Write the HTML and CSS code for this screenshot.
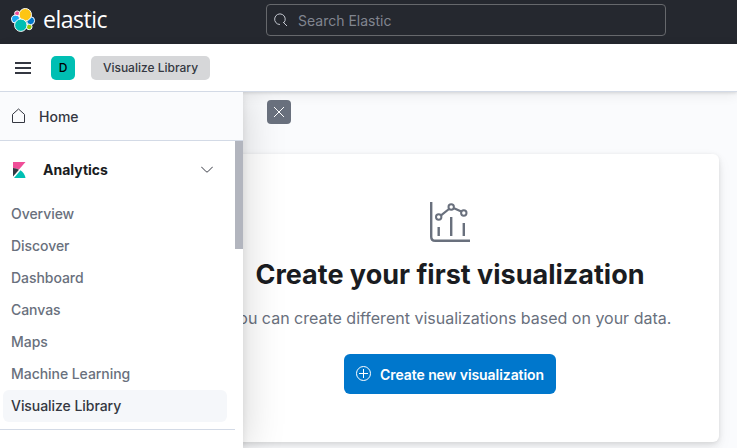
FILE: index.html
```html
<!DOCTYPE html>
<html lang="en">
<head>
<meta charset="utf-8">
<title>Elastic</title>
<link rel="stylesheet" href="styles.css">
</head>
<body>
<header class="topbar">
  <a class="brand">
    <svg class="brand-mark" width="26" height="26" viewBox="0 0 26 26" stroke="#fff" stroke-width="1">
      <circle cx="7.200" cy="6.500" r="2.600" fill="#f04e98"/>
      <circle cx="19.200" cy="19.800" r="2.900" fill="#93c90e"/>
      <circle cx="5.500" cy="12.200" r="4" fill="#1ba9f5"/>
      <circle cx="20.600" cy="13.700" r="4" fill="#0077cc"/>
      <circle cx="15.300" cy="7.700" r="6.200" fill="#fec514"/>
      <circle cx="10.800" cy="18.200" r="6.200" fill="#00bfb3"/>
    </svg>
    <span class="brand-name">elastic</span>
  </a>
  <div class="search">
    <svg width="14" height="14" viewBox="0 0 14 14" fill="none" stroke="#c3c7cf" stroke-width="1"><path d="M6 11.500A5.300 5.300 0 1 1 10 9.600M9 9l4 4"/></svg>
    <span>Search Elastic</span>
  </div>
</header>
<nav class="crumbbar">
  <svg class="menu" width="16" height="12" viewBox="0 0 16 12" fill="#343741"><path d="M0 0h16v2H0zM0 5h16v2H0zM0 10h16v2H0z"/></svg>
  <span class="space">D</span>
  <span class="crumb">Visualize Library</span>
</nav>
<div class="body">
  <main class="main">
    <section class="card">
      <svg class="chart" width="40" height="40" viewBox="0 0 40 40" fill="none" stroke="#69707d" stroke-width="2">
        <path d="M1.200 0v34.800q0 4 4 4H40M8.700 25v9M21.200 15v19M33.800 21v13" stroke-width="2.400"/>
        <path d="M11 13.300l8-6.300M24 6.200l7.300 3.400" stroke-width="2.200"/>
        <circle cx="8.700" cy="15" r="2.700"/><circle cx="21.200" cy="5" r="2.700"/><circle cx="33.800" cy="11" r="2.700"/>
      </svg>
      <h1 class="title">Create your first visualization</h1>
      <p class="text">You can create different visualizations based on your data.</p>
      <button class="create">
        <svg width="16" height="16" viewBox="0 0 16 16" fill="none" stroke="#fff"><circle cx="7.500" cy="7.500" r="7"/><path d="M3 7.500h9M7.500 3v9"/></svg>
        <span>Create new visualization</span>
      </button>
    </section>
  </main>
  <aside class="flyout">
    <a class="home">
      <svg width="15" height="16" viewBox="0 0 15 16" fill="none" stroke="#343741"><path d="M1.500 6.400L7.500 1l6 5.400v8.100h-12z" stroke-linejoin="round"/></svg>
      <span>Home</span>
    </a>
    <div class="group">
      <div class="group-head">
        <svg width="14" height="16" viewBox="0 0 14 16"><path d="M0 0h12.500L6 7.500Q3.300 6 0 6z" fill="#f04e98"/><path d="M0 6q3.300 0 6 1.700L0 14.500z" fill="#343741"/><path d="M1 16l6.500-7.700Q11.500 11 12.500 16z" fill="#00bfb3"/></svg>
        <span>Analytics</span>
        <svg class="chevron" width="12" height="8" viewBox="0 0 12 8" fill="none" stroke="#343741" stroke-linecap="round"><path d="M.5 1l4.800 4.800q.7.600 1.400 0L11.500 1"/></svg>
      </div>
      <ul class="links">
        <li>Overview</li>
        <li>Discover</li>
        <li>Dashboard</li>
        <li>Canvas</li>
        <li>Maps</li>
        <li>Machine Learning</li>
        <li class="active">Visualize Library</li>
      </ul>
    </div>
    <span class="thumb"></span>
  </aside>
  <button class="close"><svg width="12" height="12" viewBox="0 0 12 12" fill="none" stroke="#fff"><path d="M1 1l10 10M11 1L1 11"/></svg></button>
</div>
</body>
</html>
```
FILE: styles.css
```css
* { box-sizing: border-box; }
body {
  margin: 0;
  height: 448px;
  overflow: hidden;
  display: flex;
  flex-direction: column;
  font-family: Inter, "Liberation Sans", sans-serif;
  font-size: 14px;
  color: #343741;
}
button { border: 0; padding: 0; font: inherit; }
svg { flex: none; }

.topbar {
  flex: none;
  height: 44px;
  display: flex;
  align-items: flex-start;
  background: #25282f;
}
.brand { display: flex; width: 266px; padding: 7px 0 0 10px; }
.brand-name {
  margin: -2px 0 0 7px;
  font: 400 23px/28px "Open Sans", sans-serif;
  letter-spacing: -0.5px;
  color: #fff;
}
.search {
  width: 400px;
  height: 32px;
  margin-top: 4px;
  padding-left: 7px;
  display: flex;
  align-items: center;
  gap: 10px;
  border: 1px solid #66686c;
  border-radius: 4px;
  color: #81858f;
}

.crumbbar {
  flex: none;
  position: relative;
  z-index: 1;
  height: 48px;
  padding-left: 15px;
  display: flex;
  align-items: center;
  background: #fff;
  border-bottom: 1px solid #d3dae6;
  box-shadow: 0 1px 3px rgba(0, 0, 0, .12), 0 3px 12px rgba(0, 0, 0, .07);
}
.space {
  width: 24px;
  margin: 0 16px 0 20px;
  border-radius: 5px;
  background: #00bfb3;
  color: #000;
  font-size: 12px;
  font-weight: 500;
  line-height: 24px;
  text-align: center;
}
.crumb {
  width: 119px;
  border-radius: 5px;
  background: #d6d7d9;
  font-size: 12px;
  font-weight: 500;
  line-height: 24px;
  text-align: center;
}

.body {
  flex: 1;
  position: relative;
  background: #fafbfd;
}
.main { display: flex; padding: 62px 18px 0 181px; }
.card {
  flex: 1;
  height: 288px;
  padding-top: 48px;
  display: flex;
  flex-direction: column;
  align-items: center;
  background: #fff;
  border-radius: 6px;
  box-shadow: 0 1px 4px rgba(0, 0, 0, .08), 0 4px 8px rgba(0, 0, 0, .06), 0 6px 16px rgba(0, 0, 0, .05);
}
.title {
  margin: 17px 0 0;
  font-size: 27px;
  font-weight: 700;
  line-height: 32px;
  color: #1a1c21;
  white-space: nowrap;
}
.text {
  margin: 15px 0 0;
  font-size: 16px;
  line-height: 24px;
  color: #69707d;
  white-space: nowrap;
}
.create {
  width: 212px;
  height: 40px;
  margin-top: 24px;
  display: flex;
  align-items: center;
  justify-content: center;
  gap: 8px;
  border-radius: 6px;
  background: #0077cc;
  color: #fff;
  font-weight: 600;
  letter-spacing: -0.07px;
  white-space: nowrap;
}

.flyout {
  position: absolute;
  z-index: 2;
  inset: 0 auto 0 0;
  width: 243px;
  background: #fff;
  box-shadow: 0 2px 40px rgba(0, 0, 0, .18), 0 2px 8px rgba(0, 0, 0, .08);
  clip-path: inset(0 -60px 0 0);
}
.home {
  height: 49px;
  padding-left: 11px;
  display: flex;
  align-items: center;
  gap: 13px;
  background: #fafbfd;
  border-bottom: 1px solid #d3dae6;
  font-weight: 500;
}
.group {
  width: 235px;
  height: 289px;
  border-bottom: 1px solid #d3dae6;
}
.group-head {
  height: 57px;
  padding: 0 22px 0 13px;
  display: flex;
  align-items: center;
  gap: 16px;
  color: #1a1c21;
  font-weight: 700;
}
.chevron { margin-left: auto; }
.links { margin: 0; padding: 0 8px 0 3px; list-style: none; }
.links li {
  height: 32px;
  padding-left: 8px;
  border-radius: 6px;
  color: #69707d;
  font-weight: 500;
  letter-spacing: -0.05px;
  line-height: 32px;
}
.links .active { background: #f5f7fa; color: #343741; }
.thumb {
  position: absolute;
  top: 49px;
  right: 0;
  width: 8px;
  height: 108px;
  background: #b2b5be;
}
.close {
  position: absolute;
  z-index: 3;
  top: 8px;
  left: 267px;
  width: 24px;
  height: 24px;
  display: grid;
  place-items: center;
  border-radius: 4px;
  background: #69707d;
}
```
